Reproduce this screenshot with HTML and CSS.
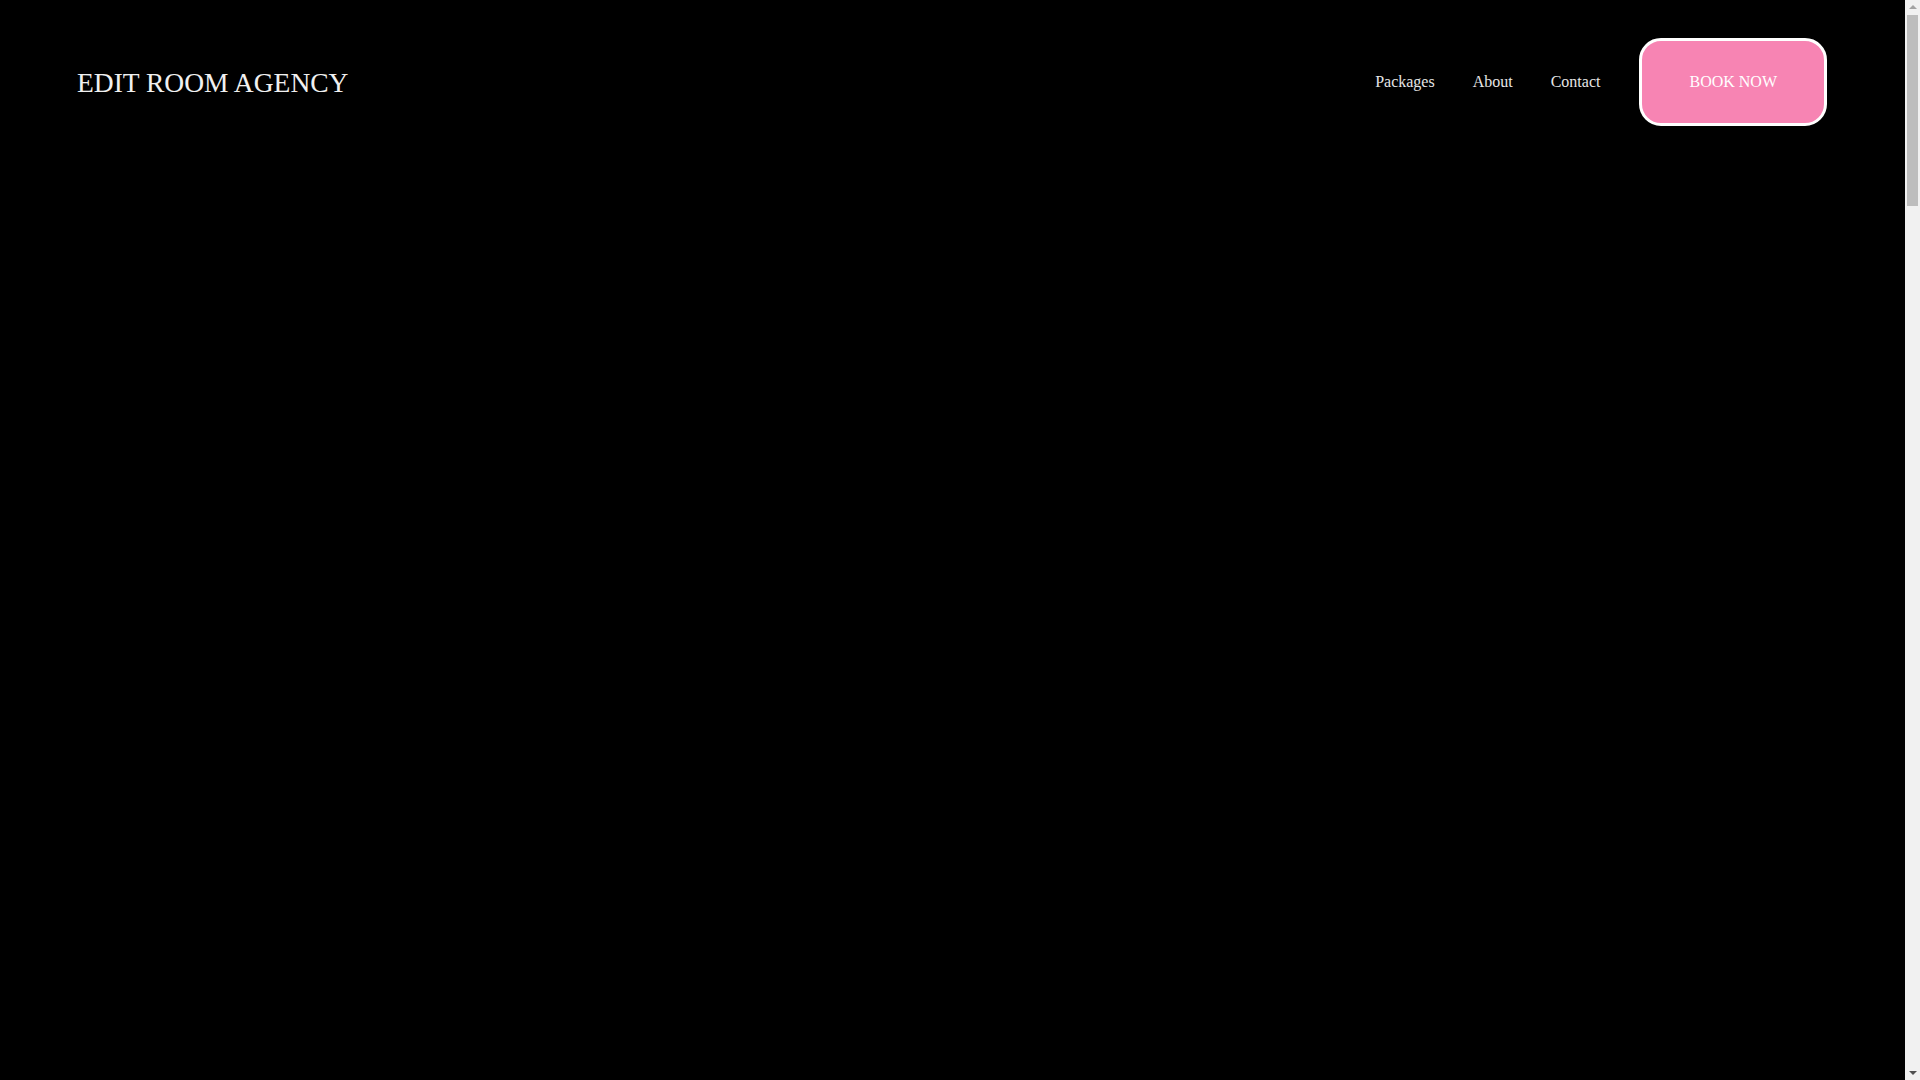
FILE: index.html
```html
<!DOCTYPE html>
<html lang="en">
<head>
<meta charset="utf-8">
<title>Edit Room Agency</title>
<link rel="stylesheet" href="styles.css">
</head>
<body>
<header class="site-header">
  <a class="logo" href="#">EDIT ROOM AGENCY</a>
  <nav class="nav">
    <a class="nav-link" href="#">Packages</a>
    <a class="nav-link" href="#">About</a>
    <a class="nav-link" href="#">Contact</a>
    <a class="book-btn" href="#">BOOK NOW</a>
  </nav>
</header>
<main class="content"></main>
<div class="fake-scrollbar" aria-hidden="true">
  <span class="sb-arrow sb-up"></span>
  <span class="sb-thumb"></span>
  <span class="sb-arrow sb-down"></span>
</div>
</body>
</html>
```
FILE: styles.css
```css
html, body {
  margin: 0;
  padding: 0;
  background: #000;
}
body {
  font-family: "Liberation Serif", "Times New Roman", serif;
  color: #f2f2f2;
}
a {
  text-decoration: none;
  color: inherit;
}
.site-header {
  display: flex;
  align-items: center;
  justify-content: space-between;
  padding: 38px 93px 0 77px;
}
.logo {
  font-size: 27.5px;
  line-height: 32px;
  color: #f0f0f0;
  margin-top: 2px;
}
.nav {
  display: flex;
  align-items: center;
}
.nav-link {
  font-size: 16px;
  line-height: 18px;
  margin-right: 38px;
  color: #e6e6e6;
}
.nav-link:nth-child(3) {
  margin-right: 39px;
}
.book-btn {
  display: block;
  font-size: 16px;
  line-height: 18px;
  padding: 32px 47px 32px;
  border: 3px solid #fff;
  border-radius: 22px;
  background: #f784b3;
  color: #fff;
}
.content {
  height: 5850px;
}
.fake-scrollbar {
  position: fixed;
  top: 0;
  right: 0;
  width: 15px;
  height: 100vh;
  background: #f1f1f1;
  display: flex;
  flex-direction: column;
  align-items: center;
}
.sb-arrow {
  display: block;
  width: 0;
  height: 0;
  border-left: 4px solid transparent;
  border-right: 4px solid transparent;
}
.sb-up {
  margin-top: 5px;
  border-bottom: 4px solid #a3a3a3;
}
.sb-down {
  margin-top: auto;
  margin-bottom: 5px;
  border-top: 4px solid #505050;
}
.sb-thumb {
  display: block;
  width: 11px;
  height: 191px;
  margin-top: 6px;
  background: #bdbdbd;
}
```
